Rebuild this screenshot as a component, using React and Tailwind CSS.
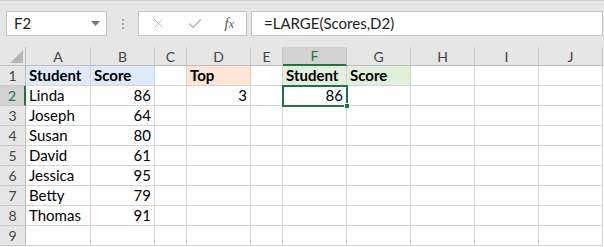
import { X, Check } from 'lucide-react';

const cols = [
  { key: 'A', w: 'w-[65px]' },
  { key: 'B', w: 'w-[64px]' },
  { key: 'C', w: 'w-[32px]' },
  { key: 'D', w: 'w-[64px]' },
  { key: 'E', w: 'w-[32px]' },
  { key: 'F', w: 'w-[64px]' },
  { key: 'G', w: 'w-[64px]' },
  { key: 'H', w: 'w-[64px]' },
  { key: 'I', w: 'w-[64px]' },
  { key: 'J', w: 'w-[64px]' },
];

const students = [
  ['Linda', 86],
  ['Joseph', 64],
  ['Susan', 80],
  ['David', 61],
  ['Jessica', 95],
  ['Betty', 79],
  ['Thomas', 91],
];

function cellFor(row, col) {
  if (row === 1) {
    if (col === 'A') return { text: 'Student', bold: true, bg: 'bg-[#ddebf7]' };
    if (col === 'B') return { text: 'Score', bold: true, bg: 'bg-[#ddebf7]' };
    if (col === 'D') return { text: 'Top', bold: true, bg: 'bg-[#fce4d6]' };
    if (col === 'F') return { text: 'Student', bold: true, bg: 'bg-[#e2efda]' };
    if (col === 'G') return { text: 'Score', bold: true, bg: 'bg-[#e2efda]' };
    return {};
  }
  const s = students[row - 2];
  if (s && col === 'A') return { text: s[0] };
  if (s && col === 'B') return { text: s[1], right: true };
  if (row === 2 && col === 'D') return { text: 3, right: true };
  if (row === 2 && col === 'F') return { text: 86, right: true, selected: true };
  return {};
}

export default function App() {
  const rows = [1, 2, 3, 4, 5, 6, 7, 8, 9];

  return (
    <div className="w-[604px] h-[247px] overflow-hidden bg-white font-['Lato','Open_Sans',sans-serif] text-[15px] text-black">
      {/* formula bar */}
      <div className="h-[47px] bg-[#e6e6e6] border-t border-[#d0d0d0] flex items-start pt-[10px] pl-[6px]">
        <div className="w-[101px] h-[25px] bg-white border border-[#c6c6c6] flex items-center justify-between pl-[7px] pr-[6px]">
          <span className="text-[15px] text-[#222]">F2</span>
          <svg width="9" height="5" viewBox="0 0 9 5"><path d="M0 0 H9 L4.5 5 Z" fill="#777" /></svg>
        </div>
        <div className="w-[31px] h-[25px] flex flex-col items-center justify-center gap-[2px]">
          <span className="w-[2px] h-[2px] bg-[#a0a0a0]" />
          <span className="w-[2px] h-[2px] bg-[#a0a0a0]" />
          <span className="w-[2px] h-[2px] bg-[#a0a0a0]" />
        </div>
        <div className="w-[109px] h-[25px] bg-white border border-[#c6c6c6] flex items-center justify-between pl-[12px] pr-[12px]">
          <X size={15} strokeWidth={1.4} color="#b4b4b4" />
          <Check size={16} strokeWidth={2.2} color="#b4b4b4" />
          <span className="font-['Liberation_Serif',serif] italic text-[15px] text-[#555] leading-none">
            f<span className="text-[12px]">x</span>
          </span>
        </div>
        <div className="ml-[4px] w-[352px] h-[25px] bg-white border border-[#c6c6c6] flex items-center pl-[12px] text-[15px] text-[#222]">
          =LARGE(Scores,D2)
        </div>
      </div>

      {/* sheet */}
      <div className="flex flex-col">
        {/* column headers */}
        <div className="flex h-[19px] bg-[#e6e6e6]">
          <div className="w-[26px] h-[19px] border-r border-b border-[#bdbdbd] flex items-end justify-end pr-[2px] pb-[2px]">
            <svg width="13" height="13" viewBox="0 0 13 13"><path d="M13 0 V13 H0 Z" fill="#b7b7b7" /></svg>
          </div>
          {cols.map((c) => (
            <div
              key={c.key}
              className={`${c.w} h-[19px] flex items-center justify-center text-[14px] border-r border-[#c8c8c8] ${
                c.key === 'F'
                  ? 'bg-[#d2d2d2] text-[#217346] border-b-2 border-b-[#217346]'
                  : 'text-[#444] border-b border-b-[#bdbdbd]'
              }`}
            >
              {c.key}
            </div>
          ))}
        </div>

        {rows.map((r) => (
          <div key={r} className="flex h-[20px]">
            <div
              className={`w-[26px] h-[20px] flex items-center justify-center text-[14px] border-b border-[#c8c8c8] ${
                r === 2
                  ? 'bg-[#d2d2d2] text-[#217346] border-r-2 border-r-[#217346]'
                  : 'bg-[#e6e6e6] text-[#444] border-r border-r-[#bdbdbd]'
              }`}
            >
              {r}
            </div>
            {cols.map((c) => {
              const cell = cellFor(r, c.key);
              return (
                <div
                  key={c.key}
                  className={`${c.w} h-[20px] relative flex items-center px-[3px] border-r border-b border-[#d4d4d4] ${
                    cell.bg || 'bg-white'
                  } ${cell.right ? 'justify-end' : 'justify-start'} ${cell.bold ? 'font-bold' : ''} ${
                    cell.selected ? 'z-10' : ''
                  }`}
                >
                  {cell.text}
                  {cell.selected && (
                    <div className="absolute -left-[1px] -top-[1px] w-[66px] h-[22px] border-2 border-[#217346]">
                      <div className="absolute -right-[4px] -bottom-[4px] w-[6px] h-[6px] bg-[#217346] border border-white" />
                    </div>
                  )}
                </div>
              );
            })}
          </div>
        ))}
      </div>
    </div>
  );
}
